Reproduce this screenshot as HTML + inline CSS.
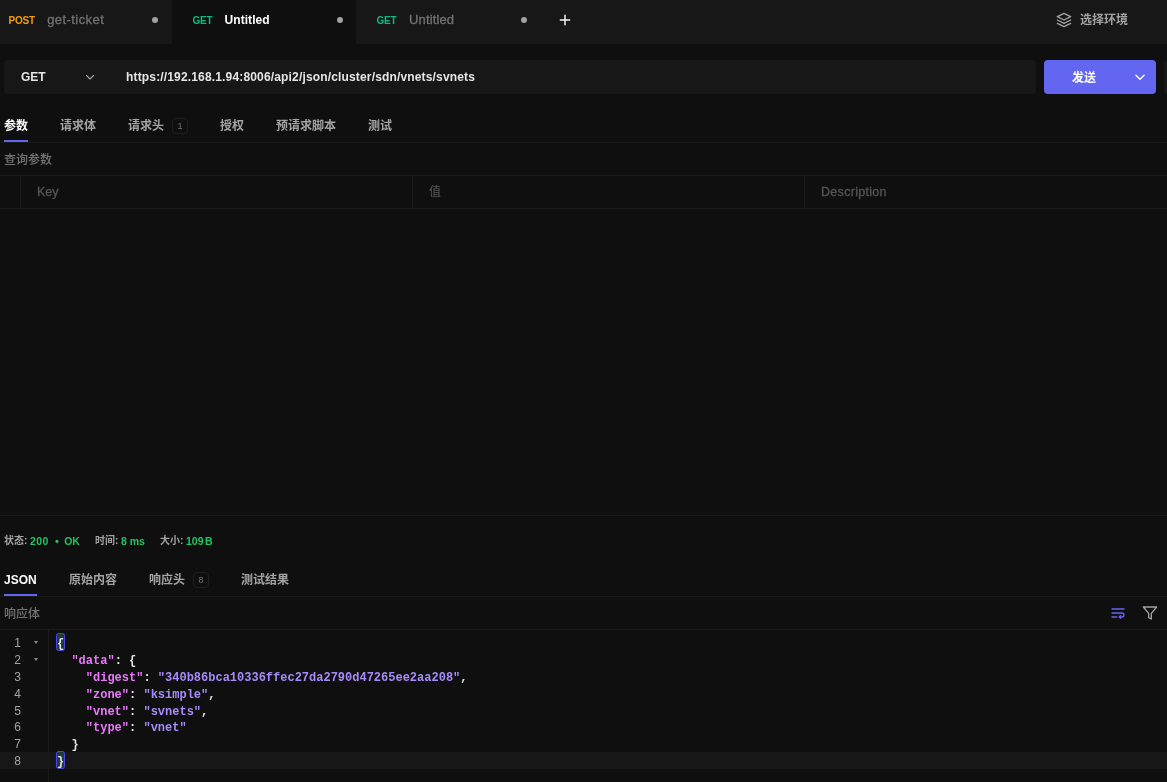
<!DOCTYPE html>
<html lang="zh-CN">
<head>
<meta charset="utf-8">
<title>Hoppscotch</title>
<style>
*{box-sizing:border-box;margin:0;padding:0}
html,body{width:1167px;height:782px;overflow:hidden;background:#0f0f0f;}
body{position:relative;font-family:"Liberation Sans","Noto Sans CJK SC",sans-serif;font-size:12px;color:#a3a3a3;-webkit-font-smoothing:antialiased}
#app{position:absolute;left:0;top:0;width:1167px;height:782px;will-change:transform}
.abs{position:absolute;white-space:nowrap}
.hl{position:absolute;left:0;width:1167px;height:1px;background:#191919}
.vl{position:absolute;width:1px;background:#191919}
/* tab bar */
#tabbar{position:absolute;left:0;top:0;width:1167px;height:44px;background:#171717}
.tab{position:absolute;top:0;height:44px;width:184px}
.tab.active{background:#0f0f0f}
.tab .m{position:absolute;left:20.5px;top:0;line-height:42px;font-size:10px;font-weight:700;letter-spacing:-.2px}
.tab .n{position:absolute;left:59.5px;top:0;line-height:40px;font-size:13px;color:#737373;-webkit-text-stroke:.3px #737373}
.tab.active .n{color:#fff;font-weight:700;line-height:41px;-webkit-text-stroke:0}
.tab .d{position:absolute;left:164px;top:17px;width:6px;height:6px;border-radius:50%;background:#a3a3a3}
.get{color:#10b981}.post{color:#f59e0b}
/* url bar */
#url{position:absolute;left:4px;top:60px;width:1032px;height:34px;background:#171717;border-radius:4px}
#send{position:absolute;left:1044px;top:60px;width:112px;height:34px;background:#6366f1;border-radius:4px}
.t{position:absolute;white-space:nowrap;font-size:12px;font-weight:700;color:#a3a3a3;line-height:16px}
.badge{position:absolute;width:16px;height:16px;border:1px solid #1f1f1f;border-radius:4px;font-size:9px;line-height:14px;text-align:center;color:#737373}
/* code */
#code{position:absolute;left:0;top:634.4px;width:1167px;font-family:"Liberation Mono","DejaVu Sans Mono",monospace;font-size:12px;font-weight:700}
.ln{position:relative;height:16.8px;line-height:16.8px;white-space:pre}
.ln .no{position:absolute;left:0;top:1px;width:21px;text-align:right;color:#a3a3a3;font-weight:400;font-family:"Liberation Sans",sans-serif}
.ln .c{position:absolute;left:57px;top:2px;color:#e5e5e5}
.k{color:#e879f9}
.fold{position:absolute;left:34px;top:6.5px;width:0;height:0;border-left:2.2px solid transparent;border-right:2.2px solid transparent;border-top:3.6px solid #8a8a8a}
.mb{position:absolute;left:56px;top:-1.4px;width:9px;height:18px;border:1px solid #4f46e5;border-radius:2.5px;background:#1d3b3a}.s{color:#a78bfa}
</style>
</head>
<body>
<div id="app">
<div id="tabbar">
  <div class="tab" style="left:-12px"><span class="m post">POST</span><span class="n" style="left:59.2px;letter-spacing:.43px">get-ticket</span><span class="d"></span></div>
  <div class="tab active" style="left:172px"><span class="m get">GET</span><span class="n" style="left:52.5px;font-size:12px;letter-spacing:.07px">Untitled</span><span class="d" style="left:165px"></span></div>
  <div class="tab" style="left:356px"><span class="m get">GET</span><span class="n" style="left:53px;letter-spacing:.14px">Untitled</span><span class="d" style="left:165px"></span></div>
  <svg class="abs" style="left:557px;top:12px" width="16" height="16" viewBox="0 0 24 24" fill="none" stroke="#f5f5f5" stroke-width="2.2" stroke-linecap="round"><path d="M5 12h14M12 5v14"/></svg>
  <svg class="abs" style="left:1056px;top:12px" width="16" height="16" viewBox="0 0 24 24" fill="none" stroke="#a3a3a3" stroke-width="2" stroke-linecap="round" stroke-linejoin="round"><path d="M12 2 2 7l10 5 10-5-10-5z"/><path d="m2 12 10 5 10-5"/><path d="m2 17 10 5 10-5"/></svg>
  <span class="t" style="left:1080px;top:12px;">选择环境</span>
</div>

<div id="url">
  <span class="t" style="left:17px;top:9px;color:#e5e5e5;font-size:12px">GET</span>
  <svg class="abs" style="left:80px;top:11px" width="12" height="12" viewBox="0 0 24 24" fill="none" stroke="#a3a3a3" stroke-width="2.2" stroke-linecap="round" stroke-linejoin="round"><path d="m5 9 7 7 7-7"/></svg>
  <span class="t" style="left:122px;top:9px;color:#e5e5e5;font-weight:700;font-size:12px;letter-spacing:.16px">https://192.168.1.94:8006/api2/json/cluster/sdn/vnets/svnets</span>
</div>
<div id="send">
  <span class="t" style="left:28px;top:10px;color:#fff">发送</span>
  <svg class="abs" style="left:89px;top:9.6px" width="14" height="14" viewBox="0 0 24 24" fill="none" stroke="#fff" stroke-width="2.4" stroke-linecap="round" stroke-linejoin="round"><path d="m5 9 7 7 7-7"/></svg>
</div>

<div class="abs" style="left:1164px;top:60px;width:12px;height:34px;background:#171717;border-radius:4px"></div>
<!-- request tabs -->
<span class="t" style="left:4px;top:118px;color:#fff">参数</span>
<span class="t" style="left:60px;top:118px">请求体</span>
<span class="t" style="left:128px;top:118px">请求头</span>
<span class="badge" style="left:172px;top:118px">1</span>
<span class="t" style="left:220px;top:118px">授权</span>
<span class="t" style="left:276px;top:118px">预请求脚本</span>
<span class="t" style="left:368px;top:118px">测试</span>
<div class="hl" style="top:142px"></div>
<div class="abs" style="left:4px;top:140px;width:24px;height:2px;background:#6366f1"></div>

<span class="t" style="left:4px;top:151.5px;color:#737373;font-weight:500">查询参数</span>
<div class="hl" style="top:175px"></div>
<div class="vl" style="left:20px;top:175px;height:33px"></div>
<div class="vl" style="left:412px;top:175px;height:33px"></div>
<div class="vl" style="left:804px;top:175px;height:33px"></div>
<span class="t" style="left:37px;top:184px;color:#555;font-weight:400;font-size:12.5px;-webkit-text-stroke:.3px #555">Key</span>
<span class="t" style="left:429px;top:184px;color:#5a5a5a;font-weight:400">值</span>
<span class="t" style="left:821px;top:184px;color:#555;font-weight:400;font-size:12.5px;letter-spacing:.3px;-webkit-text-stroke:.3px #555">Description</span>
<div class="hl" style="top:208px"></div>

<div class="hl" style="top:515px"></div>

<!-- status -->
<span class="t" style="left:4px;top:533px;font-size:10px">状态:</span>
<span class="t" style="left:30px;top:533px;font-size:10.5px;color:#22c55e;letter-spacing:.45px">200</span><span class="t" style="left:55px;top:533px;font-size:11px;color:#22c55e">•</span><span class="t" style="left:64.2px;top:533px;font-size:10.5px;color:#22c55e;letter-spacing:-.1px">OK</span>
<span class="t" style="left:95px;top:533px;font-size:10px">时间:</span>
<span class="t" style="left:121px;top:533px;font-size:10.5px;color:#22c55e">8 ms</span>
<span class="t" style="left:160px;top:533px;font-size:10px">大小:</span>
<span class="t" style="left:186px;top:533px;font-size:10.5px;color:#22c55e;word-spacing:-1.5px">109 B</span>

<!-- response tabs -->
<span class="t" style="left:4px;top:572px;color:#fff;font-size:12px">JSON</span>
<span class="t" style="left:69px;top:572px">原始内容</span>
<span class="t" style="left:149px;top:572px">响应头</span>
<span class="badge" style="left:193px;top:572px">8</span>
<span class="t" style="left:241px;top:572px">测试结果</span>
<div class="hl" style="top:596px"></div>
<div class="abs" style="left:4px;top:594px;width:33px;height:2px;background:#6366f1"></div>

<span class="t" style="left:4px;top:605.5px;color:#737373;font-weight:500">响应体</span>
<div class="hl" style="top:629px"></div>
<svg class="abs" style="left:1110px;top:605px" width="16" height="16" viewBox="0 0 24 24" fill="none" stroke="#6366f1" stroke-width="2" stroke-linecap="round" stroke-linejoin="round"><path d="M3 6h18"/><path d="M3 12h15a3 3 0 1 1 0 6h-4"/><path d="m16 16-2 2 2 2"/><path d="M3 18h7"/></svg>
<svg class="abs" style="left:1142px;top:605px" width="16" height="16" viewBox="0 0 24 24" fill="none" stroke="#a3a3a3" stroke-width="2" stroke-linecap="round" stroke-linejoin="round"><path d="M22 3H2l8 9.46V19l4 2v-8.54L22 3z"/></svg>

<div class="abs" style="left:0;top:752px;width:1167px;height:17px;background:#171717"></div>
<div class="vl" style="left:48px;top:630px;height:152px"></div>
<div id="code">
<div class="ln"><span class="no">1</span><i class="fold"></i><i class="mb"></i><span class="c">{</span></div>
<div class="ln"><span class="no">2</span><i class="fold"></i><span class="c">  <span class="k">"data"</span>: {</span></div>
<div class="ln"><span class="no">3</span><span class="c">    <span class="k">"digest"</span>: <span class="s">"340b86bca10336ffec27da2790d47265ee2aa208"</span>,</span></div>
<div class="ln"><span class="no">4</span><span class="c">    <span class="k">"zone"</span>: <span class="s">"ksimple"</span>,</span></div>
<div class="ln"><span class="no">5</span><span class="c">    <span class="k">"vnet"</span>: <span class="s">"svnets"</span>,</span></div>
<div class="ln"><span class="no">6</span><span class="c">    <span class="k">"type"</span>: <span class="s">"vnet"</span></span></div>
<div class="ln"><span class="no">7</span><span class="c">  }</span></div>
<div class="ln"><span class="no">8</span><i class="mb"></i><span class="c">}</span></div>
</div>
</div>
</body>
</html>
